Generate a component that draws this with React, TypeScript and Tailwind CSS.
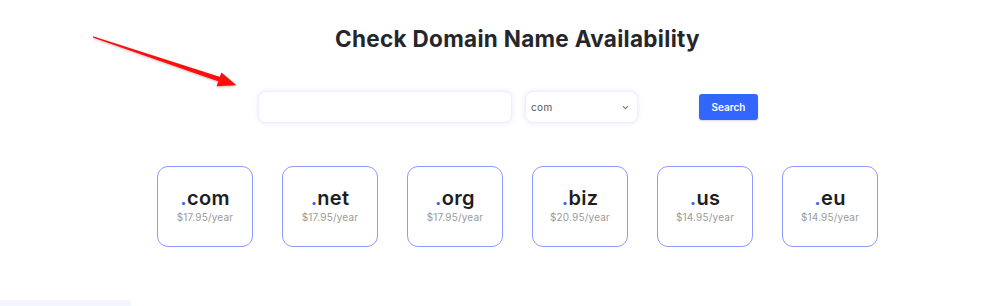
import React from "react";

const domains = [
  { tld: "com", price: "$17.95/year" },
  { tld: "net", price: "$17.95/year" },
  { tld: "org", price: "$17.95/year" },
  { tld: "biz", price: "$20.95/year" },
  { tld: "us", price: "$14.95/year" },
  { tld: "eu", price: "$14.95/year" },
];

export default function App() {
  return (
    <div
      className="relative w-[1000px] h-[306px] bg-white overflow-hidden"
      style={{ fontFamily: "Inter, 'Open Sans', sans-serif" }}
    >
      <div className="flex flex-col">
        <div className="pl-[35px] pt-[25px] flex justify-center">
          <h1 className="text-[22.5px] leading-[28px] font-bold text-[#25262b] tracking-[0.3px]">
            Check Domain Name Availability
          </h1>
        </div>
        <div className="flex items-center pl-[258px] mt-[38px]">
          <div className="w-[254px] h-[32px] rounded-[8px] bg-white border border-[#eef0fd] shadow-[0_0_5px_rgba(110,130,255,0.18)]" />
          <div className="ml-[13px] w-[113px] h-[32px] rounded-[8px] bg-white border border-[#eef0fd] shadow-[0_0_5px_rgba(110,130,255,0.18)] flex items-center justify-between pl-[5px] pr-[8px]">
            <span className="text-[10px] text-[#555] tracking-[0.4px]">com</span>
            <svg width="7" height="5" viewBox="0 0 7 5" fill="none">
              <path d="M1 1.2 L3.5 3.7 L6 1.2" stroke="#777" strokeWidth="1.1" />
            </svg>
          </div>
          <button className="ml-[61px] w-[59px] h-[26px] rounded-[3px] bg-[#3366ff] text-white text-[10px] font-semibold flex items-center justify-center shadow-[0_1px_2px_rgba(0,0,0,0.15)]">
            Search
          </button>
        </div>
        <div className="flex pl-[157px] gap-[29px] mt-[43px]">
          {domains.map((d) => (
            <div
              key={d.tld}
              className="w-[96px] h-[81px] rounded-[11px] border border-[#8a9bff] bg-white flex flex-col items-center justify-center pb-[3px]"
            >
              <div className="text-[20px] leading-[22px] font-semibold text-[#1d1d24] tracking-[0.3px]">
                <span className="text-[#3366ff]">.</span>
                {d.tld}
              </div>
              <div className="text-[10px] leading-[14px] text-[#9a9a9a] mt-[1px] tracking-[0.2px]">
                {d.price}
              </div>
            </div>
          ))}
        </div>
      </div>
      <div className="absolute left-0 bottom-0 w-[131px] h-[6px] bg-[#f3f6ff]" />
      <svg
        className="absolute left-0 top-0 pointer-events-none"
        width="300"
        height="120"
        viewBox="0 0 300 120"
      >
        <defs>
          <filter id="sh" x="-10%" y="-10%" width="120%" height="130%">
            <feDropShadow dx="0" dy="1" stdDeviation="1" floodColor="#000" floodOpacity="0.25" />
          </filter>
        </defs>
        <g filter="url(#sh)" fill="#ff0a0a">
          <polygon points="93,36.3 93.3,37.7 218.6,81.6 220.2,76.9" />
          <polygon points="221.4,72.4 236.5,85.2 216.6,86.2" />
        </g>
      </svg>
    </div>
  );
}
